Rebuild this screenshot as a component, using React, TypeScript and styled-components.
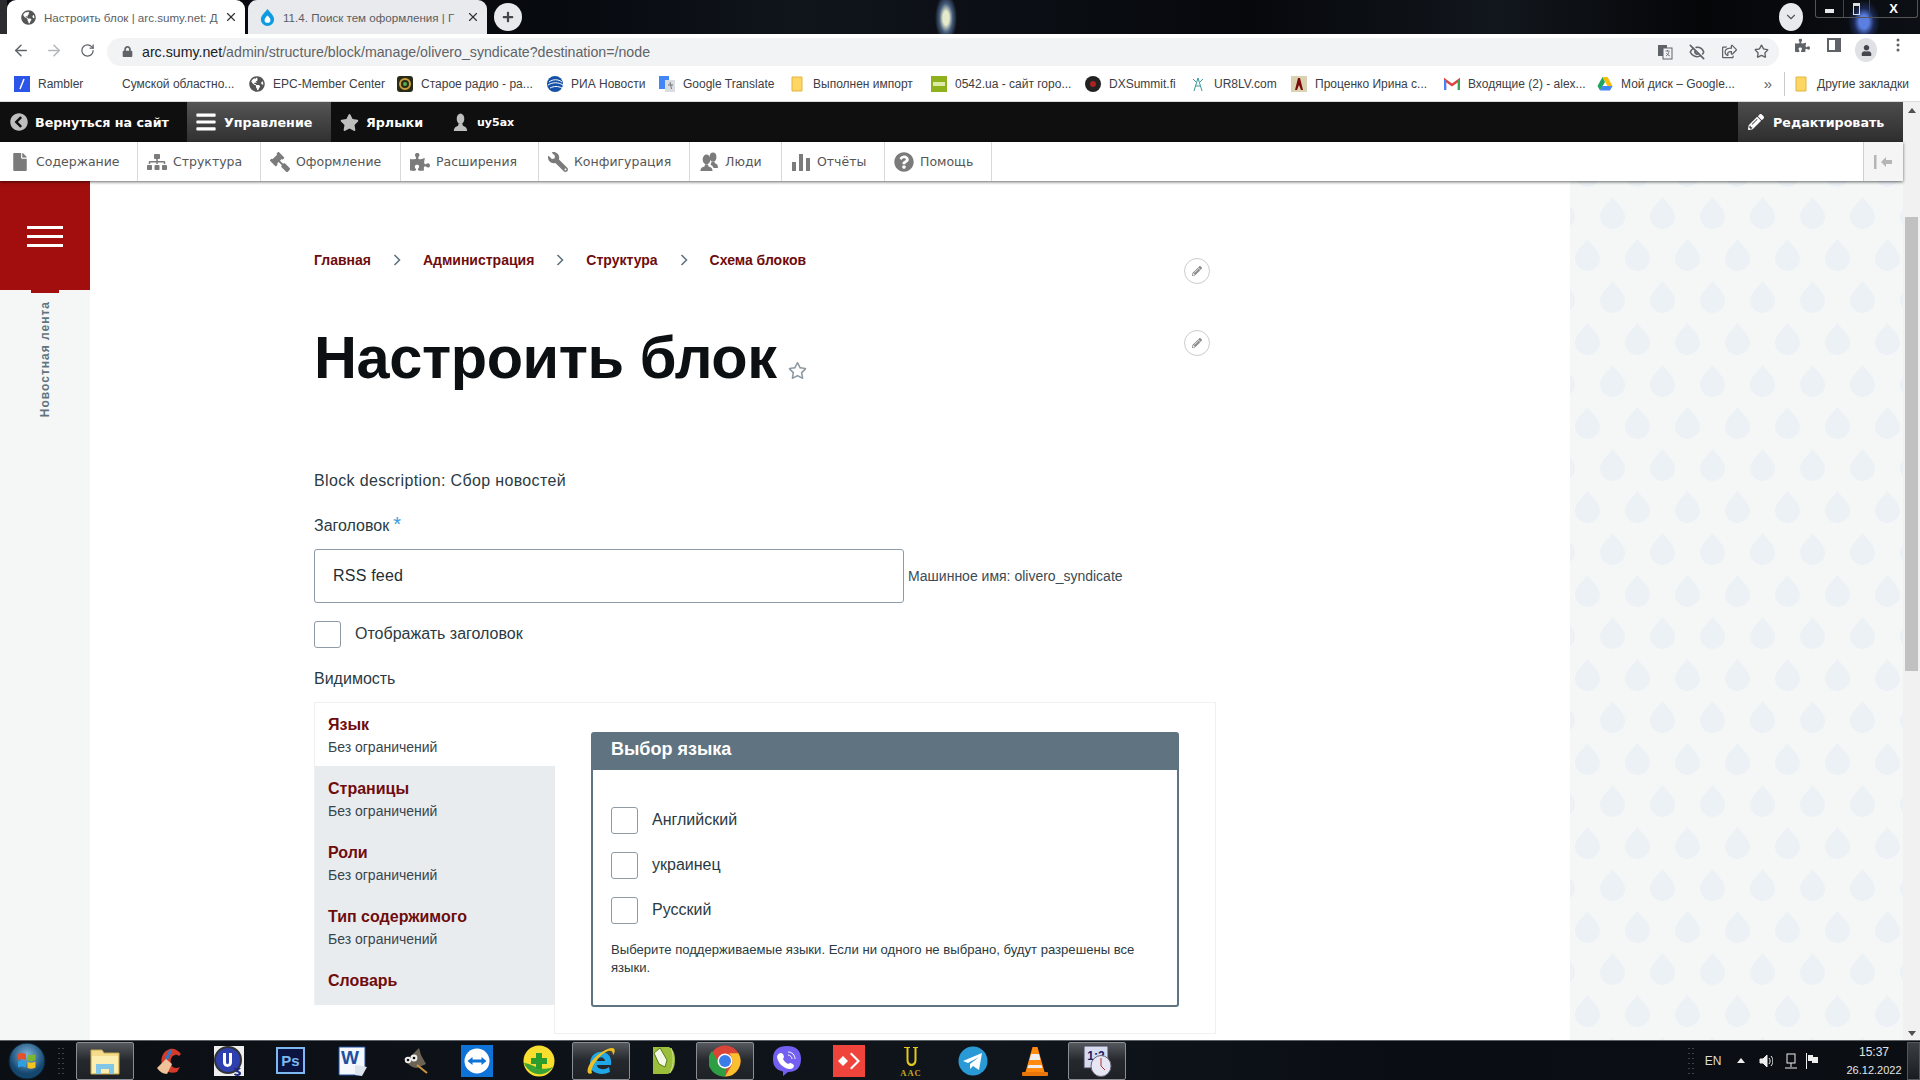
import React from "react";
import styled, { createGlobalStyle } from "styled-components";
import {
  FaChevronCircleLeft, FaBars, FaStar, FaPencilAlt, FaFile, FaSitemap, FaGavel, FaUser,
  FaPuzzlePiece, FaWrench, FaQuestionCircle, FaGlobeAmericas, FaLock, FaPlus, FaRegStar, FaRegShareSquare,
} from "react-icons/fa";
import { ArrowLeft, ArrowRight, RotateCw, X, ChevronDown, Star, EyeOff } from "lucide-react";

const dropPath = "M12.5 0C16 5 25 12 25 19.5A12.5 12.5 0 0 1 0 19.5C0 12 9 5 12.5 0Z";
const dropTile = `url("data:image/svg+xml,%3Csvg xmlns='http://www.w3.org/2000/svg' width='50' height='84'%3E%3Cg fill='%23ecf1f5'%3E%3Cpath transform='translate(30 16)' d='${dropPath}'/%3E%3Cpath transform='translate(-20 16)' d='${dropPath}'/%3E%3Cpath transform='translate(5 58)' d='${dropPath}'/%3E%3Cpath transform='translate(5 -26)' d='${dropPath}'/%3E%3C/g%3E%3C/svg%3E")`;

const Global = createGlobalStyle`
  html, body { margin: 0; padding: 0; background: #fff; overflow: hidden; }
  * { box-sizing: border-box; }
`;
const Screen = styled.div`
  width: 1920px; height: 1080px; display: flex; flex-direction: column; overflow: hidden;
  font-family: "Liberation Sans", Arial, sans-serif; color: #232d33;
`;
/* ---- browser chrome ---- */
const TabStrip = styled.div`
  height: 34px; flex: none; display: flex; align-items: flex-end; padding-left: 7px; position: relative;
  background:
    radial-gradient(ellipse 11px 24px at 946px 18px, #e4eacb 0 28%, rgba(110,145,195,.6) 60%, transparent 100%),
    radial-gradient(ellipse 16px 22px at 1864px 22px, #5a7fe0 0 30%, rgba(40,60,130,.55) 62%, transparent 100%),
    linear-gradient(90deg, #2c2c2e 0 7px, #070a0f 7px 560px, #10151c 800px, #06080c 1250px, #12171d 1500px, #050608 1700px, #0c1015 100%);
`;
const Tab = styled.div<{ $active?: boolean }>`
  width: ${p => (p.$active ? 238 : 239)}px; height: 34px; margin-right: ${p => (p.$active ? 3 : 0)}px;
  border-radius: 9px 9px 0 0; display: flex; align-items: center; gap: 8px; padding: 0 7px 0 ${p => (p.$active ? 14 : 12)}px;
  background: ${p => (p.$active ? "#fff" : "#e8eaed")}; color: #5a5e63; font-size: 11.6px; white-space: nowrap;
  & > svg { flex: none; }
`;
const TabTitle = styled.span` flex: 1; min-width: 0; `;
const NewTab = styled.div`
  width: 28px; height: 28px; border-radius: 50%; background: #e8eaed; color: #44474a; margin: 0 0 3px 7px;
  display: flex; align-items: center; justify-content: center; font-size: 12px;
`;
const Spacer = styled.div` flex: 1; `;
const TabSearch = styled.div`
  width: 24px; height: 28px; border-radius: 50%; background: #e8eaed; color: #555; margin: 0 12px 3px 0;
  display: flex; align-items: center; justify-content: center;
`;
const WinControls = styled.div`
  width: 103px; height: 18px; margin: 0 2px 16px 0; border: 1px solid #555; border-top: 0; border-radius: 0 0 3px 3px;
  display: grid; grid-template-columns: 28px 26px 1fr; color: #fff; font-size: 13px; font-weight: 700;
  & > span { display: flex; align-items: center; justify-content: center; border-right: 1px solid #444; }
  & > span:last-child { border-right: 0; }
`;
const MinGlyph = styled.i` width: 9px; height: 4px; background: #e8e8e8; margin-top: 5px; `;
const MaxGlyph = styled.i` width: 7px; height: 12px; border: 1.5px solid #ddd; border-top-width: 3px; `;
const Toolbar = styled.div`
  height: 32px; flex: none; background: #fff; display: flex; align-items: center; color: #5f6368; padding: 0 0 0 12px;
`;
const NavBtn = styled.div<{ $dim?: boolean }>`
  width: 18px; margin-right: 15px; display: flex; justify-content: center; color: ${p => (p.$dim ? "#b4b7ba" : "#5f6368")};
`;
const Omni = styled.div`
  width: 1672px; height: 28px; margin-left: -4px; margin-top: 3px; border-radius: 14px; background: #f1f3f4; display: flex; align-items: center; padding: 0 2px 0 15px;
  font-size: 14.2px; color: #5f6368; white-space: nowrap;
`;
const Url = styled.span` margin-left: 9px; flex: 1; & > b { font-weight: 400; color: #202124; } `;
const OmniIcon = styled.span` width: 32px; display: flex; justify-content: center; color: #5f6368; `;
const ToolIcon = styled.span` width: 32px; display: flex; justify-content: center; color: #5f6368; `;
const ToolIcons = styled.div` display: flex; margin-left: 7px; `;
const Avatar = styled.span`
  width: 22px; height: 24px; border-radius: 50%; background: #dfe1e5; display: flex; align-items: center; justify-content: center; color: #44484e; font-size: 11px;
`;
const Bookmarks = styled.div`
  height: 36px; flex: none; background: #fff; display: flex; align-items: center; padding-left: 14px; font-size: 12px; color: #3c4043;
  border-bottom: 1px solid #dadce0; white-space: nowrap;
`;
const Bookmark = styled.div<{ $w: number }>`
  width: ${p => p.$w}px; flex: none; display: flex; align-items: center; gap: 8px;
`;
const BmSvg = styled.svg` width: 16px; height: 16px; flex: none; `;
const BmDivider = styled.span` width: 1px; height: 24px; background: #c8cacd; margin: 0 8px 0 4px; flex: none; `;
const More = styled.span` width: 24px; font-size: 15px; flex: none; text-align: center; color: #5f6368; `;
/* ---- page viewport ---- */
const Viewport = styled.div` flex: 1; min-height: 0; display: flex; `;
const Page = styled.div` width: 1903px; display: flex; flex-direction: column; min-height: 0; `;
const AdminBar = styled.div`
  height: 40px; flex: none; background: #0f0f0f; display: flex; color: #fff; font: 700 12.7px "DejaVu Sans", Verdana, sans-serif;
`;
const AdminItem = styled.div<{ $active?: boolean; $w?: number; $pad?: number }>`
  width: ${p => (p.$w ? `${p.$w}px` : "auto")}; flex: none; height: 40px; display: flex; align-items: center; gap: 7px; padding-left: ${p => p.$pad ?? 9}px;
  background: ${p => (p.$active ? "linear-gradient(#555, #303030)" : "none")};
  & > svg { color: ${p => (p.$active ? "#fff" : "#bebebe")}; flex: none; }
`;
const EditItem = styled(AdminItem)`
  margin-left: auto; background: linear-gradient(#4c4c4c, #2e2e2e); padding-left: 10px; gap: 9px;
  & > svg { color: #fff; }
`;
const UserName = styled.span` font-size: 11px; `;
const Tray = styled.div`
  height: 39px; flex: none; background: #fff; display: flex; position: relative; z-index: 3;
  box-shadow: 0 1px 3px rgba(0,0,0,.6); color: #565656; font: 400 12.5px "DejaVu Sans", Verdana, sans-serif;
`;
const TrayItem = styled.div<{ $w: number; $flip?: boolean; $first?: boolean }>`
  width: ${p => p.$w}px; flex: none; display: flex; align-items: center; gap: ${p => (p.$first ? 8 : 6)}px; padding-left: ${p => (p.$first ? 12 : 9)}px; border-right: 1px solid #d9d9d9;
  & > svg { color: #7b7b7b; flex: none; width: ${p => (p.$first ? 16 : 20)}px; height: ${p => (p.$first ? 18 : 20)}px; ${p => (p.$flip ? "transform: scaleX(-1);" : "")} }
`;
const TrayToggle = styled.div`
  width: 40px; margin-left: auto; border-left: 1px solid #d0d0d0; background: #f5f5f5; display: flex; align-items: center; justify-content: center;
`;
const Main = styled.div` flex: 1; min-height: 0; display: flex; overflow: hidden; `;
const SideRail = styled.aside` width: 90px; flex: none; background: #f5f7f7; display: flex; flex-direction: column; align-items: center; `;
const RedBlock = styled.div`
  width: 90px; height: 109px; background: #a20e0e; display: flex; flex-direction: column; justify-content: flex-end; align-items: center; gap: 6px; padding-bottom: 43px;
`;
const BurgerBar = styled.i` display: block; width: 36px; height: 3px; background: #fff; `;
const PeekTab = styled.div` width: 28px; height: 3px; background: #a20e0e; `;
const RailLabel = styled.div`
  margin-top: 8px; writing-mode: vertical-rl; transform: rotate(180deg); color: #5f7480; font-size: 12px; font-weight: 700; letter-spacing: 1px; white-space: nowrap;
`;
const Content = styled.main` width: 1480px; flex: none; background: #fff; padding: 69px 0 0 224px; `;
const Column = styled.div` width: 902px; position: relative; `;
const Crumbs = styled.nav` display: flex; align-items: center; height: 20px; font-size: 14px; font-weight: 700; color: #6f0c0c; `;
const Crumb = styled.span``;
const CrumbSep = styled.svg` width: 8px; height: 12px; margin: 0 22px; flex: none; `;
const Pencil = styled.div<{ $top: number }>`
  position: absolute; left: 870px; top: ${p => p.$top}px; width: 26px; height: 26px; border-radius: 50%; background: #fff; border: 1px solid #ccc;
  color: #8a8a8a; display: flex; align-items: center; justify-content: center; font-size: 10px;
`;
const TitleRow = styled.div` display: flex; align-items: flex-end; margin-top: 53px; height: 70px; `;
const Title = styled.h1` margin: 0; font-size: 59.5px; line-height: 70px; font-weight: 700; color: #0d1012; letter-spacing: -0.4px; white-space: nowrap; `;
const StarLink = styled.span` color: #8d9aa3; margin: 0 0 13px 11px; display: flex; font-size: 19px; `;
const Line = styled.div<{ $mt: number; $ls?: number }>` margin-top: ${p => p.$mt}px; font-size: 16px; line-height: 24px; color: #2b3a42; letter-spacing: ${p => p.$ls ?? 0}px; `;
const Req = styled.span` color: #3b9ad9; font-size: 20px; line-height: 0; margin-left: 4px; `;
const InputRow = styled.div` display: flex; align-items: center; margin-top: 11px; `;
const TextInput = styled.div`
  width: 590px; height: 54px; border: 1px solid #8e9aa5; border-radius: 3px; display: flex; align-items: center; padding-left: 18px; font-size: 16px; color: #232d33; letter-spacing: .2px;
`;
const Machine = styled.span` margin-left: 4px; font-size: 14px; color: #3c4a53; `;
const CheckRow = styled.div<{ $mt: number }>` display: flex; align-items: center; margin-top: ${p => p.$mt}px; height: 27px; gap: 14px; font-size: 16px; color: #2b3a42; `;
const CheckText = styled.span` margin-top: -2px; `;
const CheckBox = styled.span` width: 27px; height: 27px; flex: none; background: #fff; border: 1px solid #8e9aa5; border-radius: 3px; `;
const VTabs = styled.div` display: flex; margin-top: 11px; height: 332px; `;
const VMenu = styled.div` width: 241px; flex: none; margin-right: -1px; align-self: flex-start; position: relative; z-index: 1; border-left: 1px solid #eef0f1; `;
const VItem = styled.div<{ $active?: boolean; $h?: number }>`
  height: ${p => p.$h ?? 64}px; background: ${p => (p.$active ? "#fff" : "#e9ecef")}; padding: ${p => (p.$active ? 11 : 12)}px 0 0 13px; border-top: ${p => (p.$active ? "1px solid #eef0f1" : "none")};
`;
const VTitle = styled.div` font-size: 16px; line-height: 22px; font-weight: 700; color: #6f0c0c; `;
const VSub = styled.div` margin-top: 2px; font-size: 14px; line-height: 18px; color: #37454e; `;
const VPane = styled.div` flex: 1; border: 1px solid #eef0f1; padding: 29px 0 0 36px; `;
const Panel = styled.section` width: 588px; height: 275px; border: 2px solid #5f7480; border-radius: 3px; `;
const PanelHead = styled.div` height: 36px; background: #5f7480; color: #fff; font-size: 18px; font-weight: 700; display: flex; align-items: center; padding: 0 0 6px 18px; `;
const PanelBody = styled.div` padding: 37px 18px 0; `;
const PanelHelp = styled.p` margin: 17px 0 0; font-size: 13.1px; line-height: 18px; color: #2b3a42; `;
const Scrollbar = styled.div` width: 17px; flex: none; background: #f1f1f1; display: flex; flex-direction: column; align-items: center; position: relative; `;
const Arrow = styled.i<{ $down?: boolean }>`
  width: 0; height: 0; border: 4px solid transparent; margin: 6px 0 0;
  ${p => (p.$down ? "border-top: 5px solid #505050; border-bottom: 0; margin: auto 0 4px;" : "border-bottom: 5px solid #505050; border-top: 0;")}
`;
const Thumb = styled.div` width: 13px; height: 454px; background: #c1c1c1; margin-top: 104px; `;
const DropPanel = styled.div` flex: 1; background-color: #f5f7f7; background-image: ${dropTile}; background-position: 0 0; `;
/* ---- taskbar ---- */
const Taskbar = styled.footer`
  height: 40px; flex: none; display: flex; align-items: center; position: relative; color: #eee;
  border-top: 1px solid #5c6268;
  background-image: linear-gradient(90deg, #0b0f14 0, #10151c 1000px, #0a0e14 1400px, #0b0f14 100%);
`;
const StartOrb = styled.svg` width: 38px; height: 38px; margin: 0 11px 0 8px; flex: none; `;
const Grip = styled.i<{ $end?: boolean }>`
  width: 8px; height: 30px; flex: none; margin-right: ${p => (p.$end ? 0 : 11)}px;
  background-image: radial-gradient(circle, #3d4247 0 1px, transparent 1px); background-size: 4px 5px;
`;
const TaskBtn = styled.div<{ $active?: boolean }>`
  width: 58px; height: 38px; margin-right: 4px; flex: none; display: flex; align-items: center; justify-content: center; border-radius: 2px;
  ${p => (p.$active ? "background: linear-gradient(#55595e, #25282c 48%, #1e2125); border: 1px solid #8a8d91;" : "")}
  & > svg { width: 32px; height: 32px; }
`;
const TrayZone = styled.div` margin-left: auto; display: flex; align-items: center; height: 100%; font-size: 12px; `;
const TrayIcon = styled.span<{ $w: number }>` width: ${p => p.$w}px; display: flex; justify-content: center; flex: none; color: #ddd; `;
const Clock = styled.div` width: 66px; margin-left: 18px; text-align: center; font-size: 12px; line-height: 18px; color: #e4e4e4; `;
const ClockDate = styled.div` font-size: 11px; `;
const ShowDesk = styled.i` width: 13px; height: 38px; flex: none; background: linear-gradient(#3b3f44, #191c20); border: 1px solid #54585c; `;

const Bm = ({ w, icon, text }: { w: number; icon?: React.ReactNode; text: string }) => (
  <Bookmark $w={w}>{icon}<span>{text}</span></Bookmark>
);
const Globe = () => <FaGlobeAmericas size={16} color="#555" style={{ flex: "none" }} />;
const Folder = () => (
  <BmSvg viewBox="0 0 16 16"><path d="M3 1h10v14H3z" fill="#fdd663" stroke="#e3b341" /></BmSvg>
);
const W = ({ children }: { children: React.ReactNode }) => <svg viewBox="0 0 32 32">{children}</svg>;
const Sep = () => (
  <CrumbSep viewBox="0 0 8 12"><path d="M1.5 1l5 5-5 5" fill="none" stroke="#5f7480" strokeWidth="1.6" /></CrumbSep>
);
const Bust = ({ size }: { size: number }) => (
  <svg width={size} height={size} viewBox="0 0 20 20" fill="currentColor">
    <ellipse cx="10" cy="6" rx="4" ry="5.500" />
    <path d="M8 11h4l.5 2.500c2 1 4.500 1.500 4.500 5.500H3c0-4 2.500-4.500 4.500-5.500z" />
  </svg>
);
const People = () => (
  <svg viewBox="0 0 20 20" fill="currentColor">
    <ellipse cx="14" cy="5" rx="3.400" ry="4.500" />
    <path d="M12.500 9.500h3l.4 1.800c1.500.7 3.100 1.100 3.100 4.700h-4.500c-.5-2-2-2.800-3-3.300l.6-1.400z" />
    <ellipse cx="7.500" cy="7.500" rx="3.800" ry="5" />
    <path d="M6 12.500h3l.5 2c2 .7 4 1 4 4.500h-12c0-3.500 2-3.800 4-4.500z" />
  </svg>
);

export default function App() {
  return (
    <Screen>
      <Global />
      <TabStrip>
        <Tab $active>
          <FaGlobeAmericas size={15} color="#555" />
          <TabTitle>Настроить блок | arc.sumy.net: Д</TabTitle>
          <X size={14} color="#333" />
        </Tab>
        <Tab>
          <svg width="15" height="17" viewBox="0 0 25 32">
            <path d={dropPath} fill="#0f9be0" /><path d="M12.5 12C15 15 18 17 18 20.5A5.5 5.5 0 0 1 7 20.5C7 17 10 15 12.5 12Z" fill="#fff" />
          </svg>
          <TabTitle>11.4. Поиск тем оформления | Г</TabTitle>
          <X size={14} color="#333" />
        </Tab>
        <NewTab><FaPlus /></NewTab>
        <Spacer />
        <TabSearch><ChevronDown size={14} /></TabSearch>
        <WinControls>
          <span><MinGlyph /></span><span><MaxGlyph /></span><span>X</span>
        </WinControls>
      </TabStrip>
      <Toolbar>
        <NavBtn><ArrowLeft size={19} /></NavBtn>
        <NavBtn $dim><ArrowRight size={19} /></NavBtn>
        <NavBtn><RotateCw size={15} /></NavBtn>
        <Omni>
          <FaLock size={11} color="#5f6368" />
          <Url><b>arc.sumy.net</b>/admin/structure/block/manage/olivero_syndicate?destination=/node</Url>
          <OmniIcon>
            <svg width="16" height="16" viewBox="0 0 16 16"><rect x="1" y="1" width="9" height="11" fill="#5f6368" /><rect x="6" y="4" width="9" height="11" fill="#f1f3f4" stroke="#5f6368" /><path d="M8.500 7h4M10.500 6v1.500M9 12c2-1 3-3 3-4.500M9.500 9c.5 1.500 2 2.500 3.500 3" stroke="#5f6368" fill="none" strokeWidth=".8" /></svg>
          </OmniIcon>
          <OmniIcon><EyeOff size={16} strokeWidth={2.4} /></OmniIcon>
          <OmniIcon><FaRegShareSquare size={15} /></OmniIcon>
          <OmniIcon><Star size={15} strokeWidth={2.2} /></OmniIcon>
        </Omni>
        <ToolIcons>
          <ToolIcon><FaPuzzlePiece size={15} /></ToolIcon>
          <ToolIcon><svg width="14" height="14" viewBox="0 0 14 14"><rect x="1" y="1" width="12" height="12" fill="none" stroke="#5f6368" strokeWidth="2" /><rect x="8" y="1" width="5" height="12" fill="#5f6368" /></svg></ToolIcon>
          <ToolIcon><Avatar><FaUser /></Avatar></ToolIcon>
          <ToolIcon><svg width="4" height="14" viewBox="0 0 4 14" fill="#5f6368"><circle cx="2" cy="2" r="1.5" /><circle cx="2" cy="7" r="1.5" /><circle cx="2" cy="12" r="1.5" /></svg></ToolIcon>
        </ToolIcons>
      </Toolbar>
      <Bookmarks>
        <Bm w={108} icon={<BmSvg viewBox="0 0 16 16"><rect width="16" height="16" fill="#2b55e6" /><path d="M10 3 6 13" stroke="#fff" strokeWidth="1.5" /></BmSvg>} text="Rambler" />
        <Bm w={127} text="Сумской областно..." />
        <Bm w={148} icon={<Globe />} text="EPC-Member Center" />
        <Bm w={150} icon={<BmSvg viewBox="0 0 16 16"><rect width="16" height="16" rx="3" fill="#2a2a18" /><circle cx="8" cy="8" r="5" fill="none" stroke="#c8a13a" strokeWidth="2" /><circle cx="8" cy="8" r="2" fill="#4fb04f" /></BmSvg>} text="Старое радио - ра..." />
        <Bm w={112} icon={<BmSvg viewBox="0 0 16 16"><circle cx="8" cy="8" r="8" fill="#1450a8" /><path d="M2 6c4-3 9-3 13 0M1 9c5-3 10-3 15 0M3 12c4-2 8-2 12 0" stroke="#fff" fill="none" /></BmSvg>} text="РИА Новости" />
        <Bm w={130} icon={<BmSvg viewBox="0 0 16 16"><rect width="10" height="13" fill="#4285f4" /><rect x="6" y="4" width="10" height="12" fill="#d9dce0" /><path d="M11 6l1.5 7M9 9h5" stroke="#777" /></BmSvg>} text="Google Translate" />
        <Bm w={142} icon={<Folder />} text="Выполнен импорт" />
        <Bm w={154} icon={<BmSvg viewBox="0 0 16 16"><rect width="16" height="16" fill="#8fb21c" /><rect x="2" y="6" width="12" height="4" fill="#dfe9a8" /></BmSvg>} text="0542.ua - сайт горо..." />
        <Bm w={105} icon={<BmSvg viewBox="0 0 16 16"><circle cx="8" cy="8" r="8" fill="#222" /><circle cx="8" cy="8" r="3" fill="#a22" /></BmSvg>} text="DXSummit.fi" />
        <Bm w={101} icon={<BmSvg viewBox="0 0 16 16"><path d="M8 2 4 15M8 2l4 13M5 10h6M3 3l3 3M13 3l-3 3" stroke="#3a9a9a" fill="none" /></BmSvg>} text="UR8LV.com" />
        <Bm w={153} icon={<BmSvg viewBox="0 0 16 16"><rect width="16" height="16" fill="#d9d2b0" /><path d="M4 14 7 2h2l3 12h-2l-2-5-2 5z" fill="#7a0c0c" /></BmSvg>} text="Проценко Ирина с..." />
        <Bm w={153} icon={<BmSvg viewBox="0 0 16 16"><path d="M1 14V4l7 5 7-5v10" fill="none" stroke="#d44" strokeWidth="2.4" /><path d="M1 14V4" stroke="#4285f4" strokeWidth="2.4" /><path d="M15 14V4" stroke="#34a853" strokeWidth="2.4" /></BmSvg>} text="Входящие (2) - alex..." />
        <Bm w={159} icon={<BmSvg viewBox="0 0 16 16"><path d="M5.5 1h5l5 9H10.5z" fill="#fbbc04" /><path d="M5.5 1 0.5 10l2.5 4.5L8 6z" fill="#1fa463" /><path d="M3 14.5h10l2.5-4.5h-10z" fill="#4285f4" /></BmSvg>} text="Мой диск – Google..." />
        <More>»</More>
        <BmDivider />
        <Bm w={115} icon={<Folder />} text="Другие закладки" />
      </Bookmarks>
      <Viewport>
        <Page>
          <AdminBar>
            <AdminItem $w={187} $pad={10}><FaChevronCircleLeft size={18} />Вернуться на сайт</AdminItem>
            <AdminItem $active $w={144} $pad={8}><FaBars size={22} />Управление</AdminItem>
            <AdminItem $w={111}><FaStar size={19} />Ярлыки</AdminItem>
            <AdminItem><Bust size={19} /><UserName>uy5ax</UserName></AdminItem>
            <EditItem $w={165}><FaPencilAlt size={16} />Редактировать</EditItem>
          </AdminBar>
          <Tray>
            <TrayItem $w={138} $first><FaFile />Содержание</TrayItem>
            <TrayItem $w={123}><FaSitemap />Структура</TrayItem>
            <TrayItem $w={140} $flip><FaGavel />Оформление</TrayItem>
            <TrayItem $w={138}><FaPuzzlePiece />Расширения</TrayItem>
            <TrayItem $w={151} $flip><FaWrench />Конфигурация</TrayItem>
            <TrayItem $w={92}><People />Люди</TrayItem>
            <TrayItem $w={103}>
              <svg viewBox="0 0 20 20" fill="#7b7b7b"><rect x="1" y="10" width="4" height="9" /><rect x="8" y="2" width="4" height="17" /><rect x="15" y="6" width="4" height="13" /></svg>
              Отчёты
            </TrayItem>
            <TrayItem $w={107}><FaQuestionCircle />Помощь</TrayItem>
            <TrayToggle>
              <svg width="20" height="14" viewBox="0 0 20 14" fill="#b5b5b5"><rect x="0" y="0" width="2.5" height="14" /><path d="M7 7l5-5v3h6v4h-6v3z" /></svg>
            </TrayToggle>
          </Tray>
          <Main>
            <SideRail>
              <RedBlock><BurgerBar /><BurgerBar /><BurgerBar /></RedBlock>
              <PeekTab />
              <RailLabel>Новостная лента</RailLabel>
            </SideRail>
            <Content>
              <Column>
                <Crumbs>
                  <Crumb>Главная</Crumb>
                  <Sep />
                  <Crumb>Администрация</Crumb>
                  <Sep />
                  <Crumb>Структура</Crumb>
                  <Sep />
                  <Crumb>Схема блоков</Crumb>
                </Crumbs>
                <Pencil $top={8}><FaPencilAlt /></Pencil>
                <Pencil $top={80}><FaPencilAlt /></Pencil>
                <TitleRow>
                  <Title>Настроить блок</Title>
                  <StarLink><FaRegStar /></StarLink>
                </TitleRow>
                <Line $mt={76} $ls={0.35}>Block description: Сбор новостей</Line>
                <Line $mt={21}>Заголовок<Req>*</Req></Line>
                <InputRow>
                  <TextInput>RSS feed</TextInput>
                  <Machine>Машинное имя: olivero_syndicate</Machine>
                </InputRow>
                <CheckRow $mt={18}><CheckBox /><CheckText>Отображать заголовок</CheckText></CheckRow>
                <Line $mt={19}>Видимость</Line>
                <VTabs>
                  <VMenu>
                    <VItem $active><VTitle>Язык</VTitle><VSub>Без ограничений</VSub></VItem>
                    <VItem><VTitle>Страницы</VTitle><VSub>Без ограничений</VSub></VItem>
                    <VItem><VTitle>Роли</VTitle><VSub>Без ограничений</VSub></VItem>
                    <VItem><VTitle>Тип содержимого</VTitle><VSub>Без ограничений</VSub></VItem>
                    <VItem $h={47}><VTitle>Словарь</VTitle></VItem>
                  </VMenu>
                  <VPane>
                    <Panel>
                      <PanelHead>Выбор языка</PanelHead>
                      <PanelBody>
                        <CheckRow $mt={0}><CheckBox /><CheckText>Английский</CheckText></CheckRow>
                        <CheckRow $mt={18}><CheckBox /><CheckText>украинец</CheckText></CheckRow>
                        <CheckRow $mt={18}><CheckBox /><CheckText>Русский</CheckText></CheckRow>
                        <PanelHelp>Выберите поддерживаемые языки. Если ни одного не выбрано, будут разрешены все языки.</PanelHelp>
                      </PanelBody>
                    </Panel>
                  </VPane>
                </VTabs>
              </Column>
            </Content>
            <DropPanel />
          </Main>
        </Page>
        <Scrollbar>
          <Arrow />
          <Thumb />
          <Arrow $down />
        </Scrollbar>
      </Viewport>
      <Taskbar>
        <StartOrb viewBox="0 0 38 38">
          <defs><radialGradient id="orb" cx=".5" cy=".35"><stop offset="0" stopColor="#7fb8df" /><stop offset="1" stopColor="#14466e" /></radialGradient></defs>
          <circle cx="19" cy="19" r="18" fill="url(#orb)" stroke="#0b2030" />
          <path d="M10 12c3-1.5 5-1 8 0v6c-3-1-5-1.500-8 0z" fill="#e8502a" />
          <path d="M19.500 12.500c3 1 5 1 8-.5v6c-3 1.500-5 1.500-8 .5z" fill="#7cb82f" />
          <path d="M10 19.500c3-1.500 5-1 8 0v6c-3-1-5-1.500-8 0z" fill="#2f9fe0" />
          <path d="M19.500 20c3 1 5 1 8-.5v6c-3 1.500-5 1.500-8 .5z" fill="#f5c320" />
        </StartOrb>
        <Grip />
        <TaskBtn $active>
          <W><path d="M2 5h11l2 3h15v21H2z" fill="#f4dc8c" stroke="#c9a94f" /><rect x="3" y="11" width="26" height="17" fill="#fbeeb0" /><path d="M7 29V19h18v10h-5v-5h-8v5z" fill="#7fc6e8" /></W>
        </TaskBtn>
        <TaskBtn>
          <W><path d="M30 9c-3-4-7-6-11-5C12 6 9 13 11 20c2 7 9 9 15 7l3-5c-4 2-8 1-9-3s0-8 4-9c2-.5 3 .5 4 1z" fill="#d63a2a" /><path d="M20 5l-5 10" stroke="#2f78c4" strokeWidth="3" /><path d="M15 14l-9 9c2 3 6 6 10 6l5-10z" fill="#eec39a" /></W>
        </TaskBtn>
        <TaskBtn>
          <W><rect x="1" y="1" width="30" height="30" fill="#eee" /><circle cx="15" cy="15" r="13" fill="#2e3fb0" stroke="#333" strokeWidth="2" /><path d="M10 8v9c0 6.500 9 6.500 9 0V8h-3v9c0 3-3 3-3 0V8z" fill="#fff" /><path d="M21 23h7l-3 3c2 0 3 1 3 2.500S26.500 31 24.500 31 21 30 21 29l2-.5c.3.700 2.500 1 2.500-.3 0-.8-1-1-2.500-1v-1.500l1.500-1.500H21z" fill="#1a2a80" /></W>
        </TaskBtn>
        <TaskBtn>
          <W><rect x="2" y="3" width="27" height="25" fill="#0b1440" stroke="#7db8f0" strokeWidth="2" /><text x="15.500" y="21" textAnchor="middle" fontSize="15" fontWeight="700" fill="#7db8f0" fontFamily="Liberation Sans">Ps</text></W>
        </TaskBtn>
        <TaskBtn>
          <W><path d="M2 2h26v20l-4 8H2z" fill="#f4f7fb" stroke="#1e4fa0" /><path d="M18 20l12 2-5 9-7-1z" fill="#dce4ee" /><text x="13" y="19" textAnchor="middle" fontSize="19" fontWeight="700" fill="#1e4fa0" fontFamily="Liberation Sans">W</text></W>
        </TaskBtn>
        <TaskBtn>
          <W><path d="M5 14l7-3 8-8 2 7 5 9-9 4c-4 0-9-3-13-9z" fill="#6b6353" /><circle cx="9" cy="15" r="3.200" fill="#eee" /><circle cx="15" cy="13" r="3.400" fill="#eee" /><circle cx="9" cy="15" r="1.300" fill="#111" /><circle cx="15" cy="13" r="1.300" fill="#111" /><path d="M18 20l10 8" stroke="#c8963f" strokeWidth="2" /></W>
        </TaskBtn>
        <TaskBtn>
          <W><rect x="0" y="0" width="32" height="32" fill="#0e72d6" /><circle cx="16" cy="16" r="12.500" fill="#fff" /><path d="M6.500 16l5-4v2.500h9V12l5 4-5 4v-2.500h-9V20z" fill="#0e72d6" /></W>
        </TaskBtn>
        <TaskBtn>
          <W><circle cx="16" cy="16" r="15.500" fill="#f8de2e" /><path d="M1 18c5 12 20 16 29 4 0 0-9 4-17 0S1 18 1 18z" fill="#3aa336" /><path d="M13 8h6v5h5v6h-5v5h-6v-5H8v-6h5z" fill="#2c9c2c" /></W>
        </TaskBtn>
        <TaskBtn $active>
          <W><path d="M5 19C5 11 11 6 18 7c6 1 9 6 8 13H12c0 4 7 6 12 2l1 5c-8 4-20 2-20-8zm7-3h8c-1-5-7-5-8 0z" fill="#22a7e6" /><path d="M3 28C0 20 16 4 27 3c4 0 3 5 1 7 0-3-1-5-5-4C15 9 5 22 7 28c-1 1-3 1-4 0z" fill="#f0c020" /></W>
        </TaskBtn>
        <TaskBtn>
          <W><path d="M6 2h16c5 3 6 8 6 13 0 6-2 12-7 14H6z" fill="#9bbf3a" /><path d="M7 8l6-5 7 12-2 7-6-3z" fill="#f3f7e6" stroke="#5a7a1a" /><path d="M24 3c3 6 3 18-1 25" stroke="#cfe08f" fill="none" /></W>
        </TaskBtn>
        <TaskBtn $active>
          <W><circle cx="16" cy="16" r="15.500" fill="#db4437" /><path d="M29.400 8.200A15.500 15.500 0 0 1 16 31.500l6.600-11.300c1.700-2.700 1.300-8-2.500-12z" fill="#fbc02d" /><path d="M16 31.500A15.500 15.500 0 0 1 3 6l6.700 11.600c1.300 2 4 4.600 8.200 4z" fill="#2e9e45" /><circle cx="16" cy="16" r="7.500" fill="#fff" /><circle cx="16" cy="16" r="6" fill="#3b7de8" /></W>
        </TaskBtn>
        <TaskBtn>
          <W><path d="M16 1c9 0 14 4 14 13s-5 13-13 13l-5 4v-4.500C5 25 2 21 2 14 2 5 7 1 16 1z" fill="#7360f2" /><path d="M10 8c2 0 3 3 3 4l-1 2c1 2 3 4 5 5l2-1c1 0 4 1 4 3-1 3-3 3-5 3-6-1-11-6-12-12 0-2 2-4 4-4z" fill="#fff" /><path d="M17 7c4 0 7 3 7 7M17 10c2 0 4 2 4 4" stroke="#fff" fill="none" /></W>
        </TaskBtn>
        <TaskBtn>
          <W><rect width="32" height="32" fill="#ef443b" /><path d="M10 11l5 5-5 5-5-5z" fill="#fff" /><path d="M17 9l7 7-7 7 1.500 1.500L27 16l-8.500-8.500z" fill="#fff" /></W>
        </TaskBtn>
        <TaskBtn>
          <W><path d="M9 2h6v1h-1.500v12c0 5 6 5 6 0V3H18V2h5v1h-1.500v12c0 8-10 8-10 0V3H9z" fill="#e0c81c" /><text x="16" y="30.500" textAnchor="middle" fontSize="8.500" fontWeight="700" letterSpacing="1" fill="#c8a820" fontFamily="Liberation Serif">AAC</text></W>
        </TaskBtn>
        <TaskBtn>
          <W><circle cx="16" cy="16" r="14.500" fill="#2a9ad6" /><path d="M6 16l19-8-3 17-6-4-3 3v-5l9-7-11 6z" fill="#fff" /></W>
        </TaskBtn>
        <TaskBtn>
          <W><path d="M13.500 2h5l7 25H6.500z" fill="#ff8a0f" /><path d="M12 9h8l1.500 6h-11zM9.500 20h13l1 3H8.500z" fill="#eee" /><rect x="3" y="27" width="26" height="4" rx="1" fill="#e8760a" /></W>
        </TaskBtn>
        <TaskBtn $active>
          <W><rect x="3" y="1" width="24" height="22" fill="#d8dcf0" stroke="#445" /><text x="15" y="15" textAnchor="middle" fontSize="12" fontWeight="700" fill="#1a2060" fontFamily="Liberation Sans">1:2</text><ellipse cx="20" cy="21" rx="10" ry="10.500" fill="#e6e6f4" stroke="#667" /><path d="M20 13v8l4 4" stroke="#b03030" fill="none" /></W>
        </TaskBtn>
        <TrayZone>
          <Grip $end />
          <TrayIcon $w={36}>EN</TrayIcon>
          <TrayIcon $w={20}><svg width="8" height="5" viewBox="0 0 8 5" fill="#eee"><path d="M4 0l4 5H0z" /></svg></TrayIcon>
          <TrayIcon $w={30}><svg width="14" height="16" viewBox="0 0 14 16" fill="none" stroke="#eee"><path d="M1 6h3l4-4v12l-4-4H1z" fill="#eee" /><path d="M10 5c1.500 2 1.500 4 0 6M12 3c2.500 3 2.500 7 0 10" /></svg></TrayIcon>
          <TrayIcon $w={20}><svg width="14" height="16" viewBox="0 0 14 16" fill="none" stroke="#eee"><rect x="3" y="1" width="8" height="9" /><path d="M7 10v4M1 15h12" /></svg></TrayIcon>
          <TrayIcon $w={22}><svg width="14" height="16" viewBox="0 0 14 16" fill="#eee"><rect x="1" y="0" width="1" height="16" /><path d="M3 2h5v2h5v6H7V8H3z" /></svg></TrayIcon>
          <Clock>15:37<ClockDate>26.12.2022</ClockDate></Clock>
          <ShowDesk />
        </TrayZone>
      </Taskbar>
    </Screen>
  );
}
